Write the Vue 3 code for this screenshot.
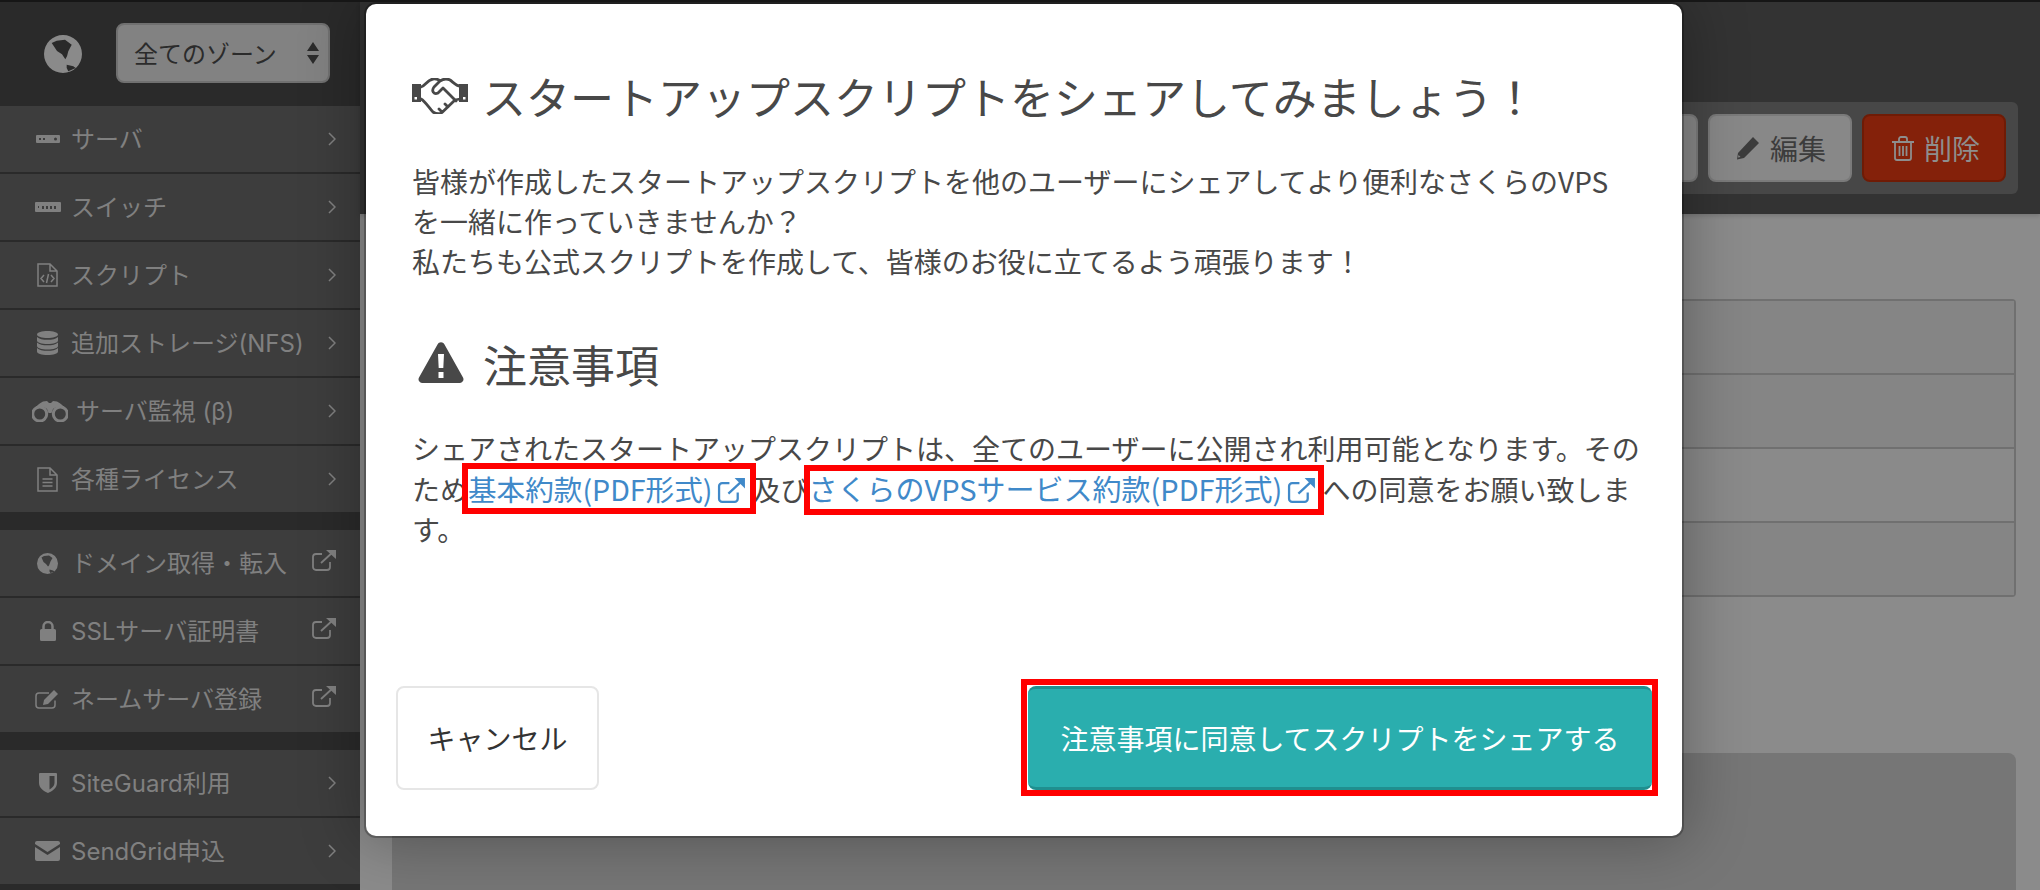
<script setup>
const groups = [
  [
    { label: 'サーバ', w: 24, h: 8, d: 'M1 0h22a1 1 0 0 1 1 1v6a1 1 0 0 1-1 1H1a1 1 0 0 1-1-1V1a1 1 0 0 1 1-1zM3 3v2h2V3zM7 3v2h2V3zM19.500 2.500a1.500 1.500 0 1 0 0 3 1.500 1.500 0 0 0 0-3z' },
    { label: 'スイッチ', w: 26, h: 10, d: 'M1 0h24a1 1 0 0 1 1 1v8a1 1 0 0 1-1 1H1a1 1 0 0 1-1-1V1a1 1 0 0 1 1-1zM3 4v2h1V4zM7 4v3h2V4zM11 4v3h2V4zM15 4v3h2V4zM19 4v3h2V4z' },
    { label: 'スクリプト', w: 21, h: 24, s: 'M1 1h12l7 7v15H1zM13 1v7h7M7 12l-3 3.500L7 19M14 12l3 3.500-3 3.500M11.500 11l-2 9' },
    { label: '追加ストレージ(NFS)', w: 21, h: 24, d: 'M10.500 0C16 0 21 1.500 21 3.500S16 7 10.500 7 0 5.500 0 3.500 5 0 10.500 0zM0 6c2 2 6 2.800 10.500 2.800S19 8 21 6v3.500c0 2-4.500 3.500-10.500 3.500S0 11.500 0 9.500zM0 11.500c2 2 6 2.800 10.500 2.800s8.500-.8 10.500-2.800V15c0 2-4.500 3.500-10.500 3.500S0 17 0 15zM0 17c2 2 6 2.800 10.500 2.800S19 19 21 17v3.500c0 2-4.500 3.500-10.500 3.500S0 22.500 0 20.500z' },
    { label: 'サーバ監視 (β)', w: 36, h: 22, wide: true, d: 'M1 11C3 7 8 3 11 1.500L15 1l2 2h2l2-2 4 .5C28 3 33 7 35 11c-3-4.500-11-5.500-14-2l-1.500 4h-3L15 9c-3-3.500-11-2.500-14 2z', s: 'M7.700 7a7 7 0 1 0 0 14 7 7 0 0 0 0-14zM28.300 7a7 7 0 1 0 0 14 7 7 0 0 0 0-14z', sw: 3 },
    { label: '各種ライセンス', w: 21, h: 25, s: 'M1 1h12l7 7v16H1zM13 1v7h7M5.500 12h10M5.500 15.500h10M5.500 19h10' },
  ],
  [
    { label: 'ドメイン取得・転入', ext: true, w: 21, h: 21, d: 'M10.500 0a10.500 10.500 0 1 1 0 21 10.500 10.500 0 0 1 0-21zM4.500 4.500L7 3l5-.5 3.500 2.500-2 3.500-1.500 4-1 1-2-2.500-2.500-2zM12.500 16.500l3.500 1 1.500 1-4 1.500-1-1.500z' },
    { label: 'SSLサーバ証明書', ext: true, w: 16, h: 20, d: 'M1.500 8h13a1.500 1.500 0 0 1 1.500 1.500v9a1.500 1.500 0 0 1-1.500 1.500h-13A1.500 1.500 0 0 1 0 18.500v-9A1.500 1.500 0 0 1 1.500 8z', s: 'M3.500 9V5.500a4.500 4.500 0 0 1 9 0V9', sw: 2.500 },
    { label: 'ネームサーバ登録', ext: true, w: 25, h: 20, d: 'M19 1l4 4-10 10-5 1 1-5z', s: 'M20 11.500V16a3 3 0 0 1-3 3H4a3 3 0 0 1-3-3V7a3 3 0 0 1 3-3h10' },
  ],
  [
    { label: 'SiteGuard利用', w: 18, h: 20, d: 'M1 0h16a1 1 0 0 1 1 1v9c0 5-5 8.500-9 10-4-1.500-9-5-9-10V1a1 1 0 0 1 1-1zM10.500 3v13.500c2.500-1.500 5-3.500 5-6.500V3z' },
    { label: 'SendGrid申込', w: 25, h: 20, d: 'M2 0h21a2 2 0 0 1 2 2v1L12.500 11 0 3V2a2 2 0 0 1 2-2zM0 6l12.500 8L25 6v12a2 2 0 0 1-2 2H2a2 2 0 0 1-2-2z' },
  ],
]

const rows = [1, 2, 3, 4]
</script>

<template>
  <div class="page">
    <aside class="sidebar">
      <div class="zone">
        <svg class="globe" width="38" height="38" viewBox="0 0 38 38">
          <path fill-rule="evenodd" d="M19 0a19 19 0 1 1 0 38 19 19 0 0 1 0-38zM7.700 8l5-2.300L21 4.700l6.700 5-3.400 6.600-1.300 5-1.700 3-3.300-5-5-3.400-3.300-5zM22.700 29.700l6.600 1.600 2.400 1.700-7.400 3.300-1.600-3.300z" />
        </svg>
        <div class="select">
          <span>全てのゾーン</span>
          <svg width="12" height="22" viewBox="0 0 12 22"><path d="M6 0l6 9H0zM0 13h12l-6 9z" /></svg>
        </div>
      </div>

      <nav v-for="(group, g) in groups" :key="g" class="group">
        <a v-for="item in group" :key="item.label" class="item">
          <span class="item-icon" :class="{ wide: item.wide }">
            <svg :width="item.w" :height="item.h" :viewBox="`0 0 ${item.w} ${item.h}`">
              <path v-if="item.d" :d="item.d" fill-rule="evenodd" />
              <path v-if="item.s" :d="item.s" class="line" :stroke-width="item.sw || 1.5" />
            </svg>
          </span>
          <span class="item-label">{{ item.label }}</span>
          <svg v-if="item.ext" class="ext" width="24" height="21" viewBox="0 0 24 21">
            <path class="line" stroke-width="1.800" d="M18 12v5a3 3 0 0 1-3 3H4a3 3 0 0 1-3-3V7a3 3 0 0 1 3-3h6M9 13L21 2" />
            <path d="M14 0h10v9z" />
          </svg>
          <svg v-else class="chevron" width="8" height="14" viewBox="0 0 8 14">
            <path class="line" stroke-width="1.500" d="M1 1l6 6-6 6" />
          </svg>
        </a>
      </nav>
    </aside>

    <main class="main">
      <header class="topbar">
        <div class="toolbar">
          <button class="tool"></button>
          <button class="tool edit">
            <svg width="24" height="24" viewBox="0 0 24 24"><path d="M17 1l6 6-15 15-7 1.500L2 17zM2.500 19l-.5 2.500 2.500-.5z" fill-rule="evenodd" /></svg>
            編集
          </button>
          <button class="tool danger">
            <svg width="22" height="25" viewBox="0 0 22 25"><path class="line" stroke-width="1.800" d="M0 6h22M3 6v16a2 2 0 0 0 2 2h12a2 2 0 0 0 2-2V6M7 6V3a2 2 0 0 1 2-2h4a2 2 0 0 1 2 2v3M7.500 10v10M11 10v10M14.500 10v10" /></svg>
            削除
          </button>
        </div>
      </header>
      <section class="content">
        <div class="table">
          <div v-for="row in rows" :key="row" class="row"></div>
        </div>
        <div class="panel"></div>
      </section>
    </main>

    <div class="modal">
      <div class="modal-body">
        <h2 class="heading">
          <svg width="56" height="36" viewBox="0 0 56 36">
            <path fill-rule="evenodd" d="M0 6h9v18H0zM2.500 19v2.500H5V19zM47 6h9v18h-9zM51 19v2.500h2.500V19z" />
            <path class="line" stroke-width="2.800" stroke-linejoin="round" stroke-linecap="round" d="M9 9c4-1 6-7 12-8 4-.5 6 1 7 2 3-2 7-2.500 10-1 3 2 6 6 10 6M9 21c4 2 9 10 12 13 4 2.500 7 2 9 .5L43 22l5-1M28 3l-6 6c-3 4 0 8 4 6l5-5 13 13M36 29l-3-3M30 34l-3-3" />
          </svg>
          スタートアップスクリプトをシェアしてみましょう！
        </h2>
        <p class="text">
          皆様が作成したスタートアップスクリプトを他のユーザーにシェアしてより便利なさくらのVPS<br>を一緒に作っていきませんか？<br>私たちも公式スクリプトを作成して、皆様のお役に立てるよう頑張ります！
        </p>
        <h2 class="heading notice">
          <svg class="warn" width="46" height="41" viewBox="0 0 46 41">
            <path fill-rule="evenodd" d="M19.500 2.500c1.500-3 5.500-3 7 0l18.500 33c1.500 2.500-.5 5.500-3.500 5.500h-37C1.500 41-.5 38 1 35.500zM20 12l.7 14h4.600l.7-14zM20.500 30v6h5v-6z" />
          </svg>
          注意事項
        </h2>
        <p class="text terms">
          シェアされたスタートアップスクリプトは、全てのユーザーに公開され利用可能となります。そのため<a class="link first">基本約款(PDF形式)<svg width="29" height="26" viewBox="0 0 28 25"><path class="line" stroke-width="2.200" d="M20 14v6a3 3 0 0 1-3 3H5a3 3 0 0 1-3-3V8a3 3 0 0 1 3-3h7M11 15L24 3" /><path d="M17 0h10v10z" /></svg></a>及び<a class="link second">さくらのVPSサービス約款(PDF形式)<svg width="29" height="26" viewBox="0 0 28 25"><path class="line" stroke-width="2.200" d="M20 14v6a3 3 0 0 1-3 3H5a3 3 0 0 1-3-3V8a3 3 0 0 1 3-3h7M11 15L24 3" /><path d="M17 0h10v10z" /></svg></a>への同意をお願い致します。
        </p>
      </div>
      <div class="modal-footer">
        <button class="cancel">キャンセル</button>
        <div class="agree-wrap">
          <button class="agree">注意事項に同意してスクリプトをシェアする</button>
        </div>
      </div>
    </div>
  </div>
</template>

<style>
html,
body {
  margin: 0;
  background: #8b8b8b;
}
</style>

<style scoped>
.page {
  position: relative;
  display: flex;
  box-sizing: border-box;
  width: 2040px;
  height: 890px;
  overflow: hidden;
  border-top: 2px solid #161616;
  font-family: "Noto Sans CJK JP", "Open Sans", sans-serif;
  color: #484848;
}

svg {
  display: block;
  fill: currentColor;
}

.line {
  fill: none;
  stroke: currentColor;
}

/* sidebar */
.sidebar {
  flex: none;
  width: 360px;
  background: #2a2a2a;
}

.zone {
  display: flex;
  align-items: center;
  gap: 34px;
  box-sizing: border-box;
  height: 104px;
  padding-left: 44px;
}

.globe {
  color: #8a8a8a;
}

.select {
  display: flex;
  align-items: center;
  justify-content: space-between;
  box-sizing: border-box;
  width: 214px;
  height: 60px;
  margin-top: -3px;
  padding: 0 9px 0 16px;
  border: 2px solid #707070;
  border-radius: 8px;
  background: #828282;
  color: #2b2b2b;
  font-size: 24px;
}

.group {
  margin-bottom: 18px;
}

.item {
  display: flex;
  align-items: center;
  box-sizing: border-box;
  height: 68px;
  padding-right: 24px;
  border-bottom: 2px solid #2a2a2a;
  background: #3d3d3d;
  color: #808080;
  font-family: Inter, "Noto Sans CJK JP", sans-serif;
  font-size: 24px;
}

.item:last-child {
  height: 66px;
  border-bottom: 0;
}

.item-icon {
  display: flex;
  justify-content: center;
  flex: none;
  width: 47px;
  margin-left: 24px;
}

.item-icon.wide {
  width: 36px;
  margin-left: 32px;
  margin-right: 8px;
}

.item-label {
  flex: 1;
  white-space: nowrap;
  margin-top: -3px;
}

.chevron {
  flex: none;
}

.ext {
  flex: none;
  margin-top: -6px;
}

/* main */
.main {
  flex: 1;
  display: flex;
  flex-direction: column;
  min-width: 0;
  background: #8b8b8b;
}

.topbar {
  display: flex;
  justify-content: flex-end;
  box-sizing: border-box;
  height: 212px;
  padding: 100px 22px 0 0;
  background: #333;
  box-shadow: 0 2px 4px rgba(0, 0, 0, 0.15);
}

.toolbar {
  display: flex;
  gap: 10px;
  box-sizing: border-box;
  height: 92px;
  padding: 12px;
  border-radius: 6px;
  background: #474747;
}

.tool {
  display: flex;
  align-items: center;
  justify-content: center;
  gap: 10px;
  box-sizing: border-box;
  width: 144px;
  height: 68px;
  padding: 0;
  border: 2px solid #7a7a7a;
  border-radius: 8px;
  background: #888;
  color: #3c3c3c;
  font: inherit;
  font-size: 28px;
}

.tool.edit {
  padding-left: 2px;
}

.tool.danger {
  padding-left: 4px;
  border-color: #6f1b05;
  background: #84210a;
  color: #8e8e8e;
}

.content {
  flex: 1;
  display: flex;
  flex-direction: column;
  padding: 85px 24px 0 32px;
}

.table {
  flex: none;
  border: 2px solid #707070;
  border-radius: 4px;
}

.row {
  height: 72px;
  border-bottom: 2px solid #707070;
  background: #858585;
}

.row:nth-child(3) {
  background: #8a8a8a;
}

.row:last-child {
  height: 72px;
  border-bottom: 0;
}

.panel {
  flex: 1;
  margin-top: 156px;
  border-radius: 8px 8px 0 0;
  background: #767676;
}

/* modal */
.modal {
  position: absolute;
  left: 366px;
  top: 2px;
  display: flex;
  flex-direction: column;
  justify-content: space-between;
  box-sizing: border-box;
  width: 1316px;
  height: 832px;
  padding: 0 30px 46px;
  border-radius: 10px;
  background: #fff;
  box-shadow: 0 0 0 2px rgba(0, 0, 0, 0.25), 0 0 60px 6px rgba(0, 0, 0, 0.28);
}

.modal-body {
  width: 1236px;
  padding: 62px 0 0 16px;
}

.heading {
  display: flex;
  align-items: center;
  gap: 14px;
  height: 60px;
  margin: 0;
  font-size: 44px;
  font-weight: 400;
  line-height: 60px;
}

.heading.notice {
  margin-top: 53px;
}

.warn {
  margin: -4px 5px 0 6px;
}

.text {
  margin: 35px 0 0;
  font-size: 28px;
  line-height: 40px;
}

.text.terms {
  margin-top: 34px;
}

.link {
  position: relative;
  color: #4089c9;
}

.link svg {
  display: inline-block;
  margin: 0 6px 0 5px;
  vertical-align: -3px;
}

.link::after {
  content: "";
  position: absolute;
  border: 6px solid #f00;
  pointer-events: none;
}

.link.first {
  font-size: 28.6px;
}

.link.first::after {
  top: -5px;
  right: -4px;
  bottom: -5px;
  left: -6px;
}

.link.second {
  font-size: 29px;
}

.link.second::after {
  top: -2px;
  right: -2px;
  bottom: -6px;
  left: -4px;
}

.modal-footer {
  display: flex;
  align-items: flex-end;
  justify-content: space-between;
}

.cancel {
  box-sizing: border-box;
  width: 203px;
  height: 104px;
  border: 2px solid #e6e6e6;
  border-radius: 8px;
  background: #fff;
  color: #333;
  font: inherit;
  font-size: 28px;
}

.agree-wrap {
  position: relative;
}

.agree-wrap::after {
  content: "";
  position: absolute;
  inset: -7px -6px -6px -7px;
  border: 6px solid #f00;
  pointer-events: none;
}

.agree {
  display: block;
  box-sizing: border-box;
  width: 624px;
  height: 104px;
  border: 0;
  border-top: 3px solid #1f8f8f;
  border-bottom: 3px solid #1f8f8f;
  border-radius: 8px;
  background: #2aaeae;
  color: #fff;
  font: inherit;
  font-size: 28px;
}
</style>
